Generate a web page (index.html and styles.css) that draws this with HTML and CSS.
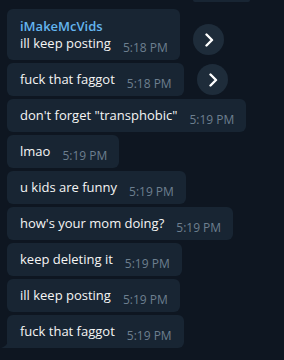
FILE: index.html
```html
<!DOCTYPE html>
<html lang="en">
<head>
    <meta charset="UTF-8">
    <meta name="viewport" content="width=device-width, initial-scale=1.0">
    <title>Chat</title>
    <link rel="stylesheet" href="styles.css">
</head>
<body>
    <div class="chat">
        <div class="prev"></div>

        <div class="row">
            <div class="bubble first">
                <div class="name">iMakeMcVids</div>
                <div class="line">
                    <span class="text">ill keep posting</span>
                    <span class="time">5:18 PM</span>
                </div>
            </div>
            <div class="share top">
                <svg width="10" height="14" viewBox="0 0 10 14"><path d="M2.5 1.5 L8 7 L2.5 12.5" fill="none" stroke="#fff" stroke-width="2.4" stroke-linecap="round" stroke-linejoin="round"/></svg>
            </div>
        </div>

        <div class="row">
            <div class="bubble">
                <div class="line">
                    <span class="text">fuck that faggot</span>
                    <span class="time">5:18 PM</span>
                </div>
            </div>
            <div class="share">
                <svg width="10" height="14" viewBox="0 0 10 14"><path d="M2.5 1.5 L8 7 L2.5 12.5" fill="none" stroke="#fff" stroke-width="2.4" stroke-linecap="round" stroke-linejoin="round"/></svg>
            </div>
        </div>

        <div class="row">
            <div class="bubble">
                <div class="line">
                    <span class="text">don't forget "transphobic"</span>
                    <span class="time">5:19 PM</span>
                </div>
            </div>
        </div>

        <div class="row">
            <div class="bubble">
                <div class="line">
                    <span class="text">lmao</span>
                    <span class="time">5:19 PM</span>
                </div>
            </div>
        </div>

        <div class="row">
            <div class="bubble">
                <div class="line">
                    <span class="text">u kids are funny</span>
                    <span class="time">5:19 PM</span>
                </div>
            </div>
        </div>

        <div class="row">
            <div class="bubble">
                <div class="line">
                    <span class="text">how's your mom doing?</span>
                    <span class="time">5:19 PM</span>
                </div>
            </div>
        </div>

        <div class="row">
            <div class="bubble">
                <div class="line">
                    <span class="text">keep deleting it</span>
                    <span class="time">5:19 PM</span>
                </div>
            </div>
        </div>

        <div class="row">
            <div class="bubble">
                <div class="line">
                    <span class="text">ill keep posting</span>
                    <span class="time">5:19 PM</span>
                </div>
            </div>
        </div>

        <div class="row">
            <div class="bubble last">
                <svg class="tail" width="8" height="10" viewBox="0 0 8 10"><path d="M8 0 L8 10 L0 10 C4 9 7 6 8 0 Z" fill="#182533"/></svg>
                <div class="line">
                    <span class="text">fuck that faggot</span>
                    <span class="time">5:19 PM</span>
                </div>
            </div>
        </div>
    </div>
</body>
</html>
```

FILE: styles.css
```css
* {
    margin: 0;
    padding: 0;
    box-sizing: border-box;
}

body {
    background: #0e1621;
    font-family: 'Open Sans', 'Noto Sans', sans-serif;
    width: 284px;
    height: 360px;
    overflow: hidden;
}

.chat {
    display: flex;
    flex-direction: column;
    gap: 3px;
    padding-left: 7px;
}

.prev {
    width: 57px;
    height: 2px;
    margin-left: 186px;
    margin-bottom: 4px;
    background: #182533;
    border-radius: 0 0 4px 4px;
}

.row {
    display: flex;
    align-items: flex-end;
    gap: 13px;
}

.bubble {
    position: relative;
    background: #182533;
    border-radius: 6px;
    padding: 6px 12px 7px 13px;
}

.bubble.first {
    padding-top: 10px;
}

.bubble.last {
    border-bottom-left-radius: 0;
}

.tail {
    position: absolute;
    left: -6px;
    bottom: 0;
}

.name {
    color: #64b5ef;
    font-size: 13px;
    font-weight: 600;
    line-height: 14px;
}

.line {
    display: flex;
    align-items: flex-end;
    gap: 12px;
}

.text {
    color: #f5f5f5;
    font-size: 13px;
    line-height: 20px;
    white-space: nowrap;
}

.time {
    color: #6d7f8f;
    font-size: 12px;
    line-height: 16px;
    margin-bottom: -3px;
    white-space: nowrap;
}

.share {
    width: 31px;
    height: 31px;
    border-radius: 50%;
    background: #1e2c3a;
    display: flex;
    align-items: center;
    justify-content: center;
    margin-bottom: 1px;
}

.share.top {
    margin-bottom: 5px;
}

.share svg {
    margin-left: 2px;
}
```
